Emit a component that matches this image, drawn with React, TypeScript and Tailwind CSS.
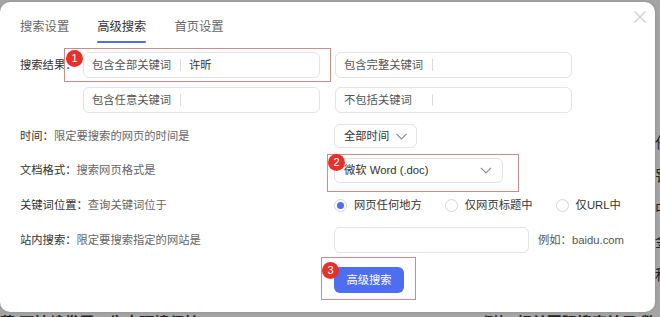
import React from 'react';

const Badge = ({ n }: { n: number }) => (
  <div className="w-[17px] h-[17px] rounded-full bg-[#e8302b] text-white text-[11px] leading-[17px] text-center">{n}</div>
);

const Chevron = ({ w = 11 }: { w?: number }) => (
  <svg width={w} height="7" viewBox="0 0 11 7" fill="none">
    <polyline points="0.5,0.8 5.5,6 10.5,0.8" stroke="#8a8a8a" strokeWidth="1.1" />
  </svg>
);

const KeywordInput = ({ prefix, value, w }: { prefix: string; value?: string; w: string }) => (
  <div className={`${w} h-[26px] border border-[#e3e3e3] rounded-[6px] flex items-center pl-[8px] bg-white`}>
    <span className="w-[88px] text-[#555]">{prefix}</span>
    <span className="w-px h-[12px] bg-[#dcdcdc]"></span>
    <span className="ml-[8px] text-[#333]">{value}</span>
  </div>
);

const Radio = ({ checked, label }: { checked?: boolean; label: string }) => (
  <div className="flex items-center gap-[7px]">
    <span className="w-[13px] h-[13px] rounded-full border border-[#d6d6d6] flex items-center justify-center bg-white">
      {checked && <span className="w-[7px] h-[7px] rounded-full bg-[#4e6ef2]"></span>}
    </span>
    <span className="text-[#333]">{label}</span>
  </div>
);

const Label = ({ name, desc }: { name: string; desc: string }) => (
  <div className="w-[314px]">
    <span className="text-[#333]">{name}：</span>
    <span className="text-[#666]">{desc}</span>
  </div>
);

export default function App() {
  return (
    <div className="w-[660px] h-[317px] overflow-hidden bg-[#a4a4a4] flex flex-col font-['Liberation_Sans','Noto_Sans_CJK_SC',sans-serif] text-[11.3px]">
      <div className="flex">
        <div className="relative w-[655px] h-[310px] mt-[2px] bg-white rounded-[10px] pt-[13px] pl-[20px] flex flex-col shadow-[0_0_3px_rgba(0,0,0,0.15)]">
          {/* close */}
          <svg className="absolute left-[634px] top-[9px]" width="12" height="12" viewBox="0 0 12 12">
            <path d="M0.5 0.5 L11.5 11.5 M11.5 0.5 L0.5 11.5" stroke="#cfcfcf" strokeWidth="1.2" />
          </svg>

          {/* tabs */}
          <div className="flex gap-[28px] text-[12.3px]">
            <div className="flex flex-col">
              <span className="h-[24px] leading-[24px] text-[#666]">搜索设置</span>
            </div>
            <div className="flex flex-col">
              <span className="h-[24px] leading-[24px] text-[#333]">高级搜索</span>
              <span className="mt-[2px] h-[2px] bg-[#4e6ef2] rounded-full"></span>
            </div>
            <div className="flex flex-col">
              <span className="h-[24px] leading-[24px] text-[#666]">首页设置</span>
            </div>
          </div>

          {/* keyword rows */}
          <div className="relative mt-[9px] flex items-center">
            <div className="w-[63px] text-[#333] whitespace-nowrap">搜索结果：</div>
            <div className="flex gap-[15px]">
              <KeywordInput prefix="包含全部关键词" value="许昕" w="w-[237px]" />
              <KeywordInput prefix="包含完整关键词" w="w-[237px]" />
            </div>
            <div className="absolute left-[44px] top-[-4px] w-[267px] h-[34px] border border-[#cf8b8b]"></div>
            <div className="absolute left-[46px] top-[-2px]"><Badge n={1} /></div>
          </div>
          <div className="mt-[9px] flex gap-[15px] pl-[63px]">
            <KeywordInput prefix="包含任意关键词" w="w-[237px]" />
            <KeywordInput prefix="不包括关键词" w="w-[237px]" />
          </div>

          {/* time */}
          <div className="mt-[11px] flex items-center">
            <Label name="时间" desc="限定要搜索的网页的时间是" />
            <div className="w-[83px] h-[24px] border border-[#e3e3e3] rounded-[6px] flex items-center pl-[9px] gap-[7px] text-[#333]">
              <span>全部时间</span>
              <Chevron />
            </div>
          </div>

          {/* doc format */}
          <div className="relative mt-[10px] flex items-center">
            <Label name="文档格式" desc="搜索网页格式是" />
            <div className="w-[169px] h-[25px] border border-[#e3e3e3] rounded-[6px] flex items-center justify-between pl-[9px] pr-[10px] text-[#333]">
              <span>微软 Word (.doc)</span>
              <Chevron w={12} />
            </div>
            <div className="absolute left-[307px] top-[-4px] w-[192px] h-[38px] border border-[#cf8b8b]"></div>
            <div className="absolute left-[308px] top-[-4px]"><Badge n={2} /></div>
          </div>

          {/* keyword position */}
          <div className="mt-[12px] h-[20px] flex items-center">
            <Label name="关键词位置" desc="查询关键词位于" />
            <div className="flex gap-[23px]">
              <Radio checked label="网页任何地方" />
              <Radio label="仅网页标题中" />
              <Radio label="仅URL中" />
            </div>
          </div>

          {/* site */}
          <div className="mt-[12px] flex items-center">
            <Label name="站内搜索" desc="限定要搜索指定的网站是" />
            <div className="w-[195px] h-[26px] border border-[#e3e3e3] rounded-[6px]"></div>
            <span className="ml-[9px] text-[#555]">例如：baidu.com</span>
          </div>

          {/* submit */}
          <div className="relative mt-[14px] pl-[314px]">
            <button className="w-[70px] h-[26px] rounded-[6px] bg-[#4e6ef2] text-white text-[11.3px]">高级搜索</button>
            <div className="absolute left-[301px] top-[-10px] w-[95px] h-[43px] border border-[#cf8b8b]"></div>
            <div className="absolute left-[302px] top-[-5px]"><Badge n={3} /></div>
          </div>
        </div>
        <div className="w-[5px] overflow-hidden flex flex-col text-[#222] text-[15px] leading-none whitespace-nowrap pt-[135px] gap-[18px]">
          <span>任</span>
          <span>罚</span>
          <span>中</span>
          <span>金</span>
          <span>科</span>
        </div>
      </div>
      <div className="flex justify-between text-[#222] text-[15px] font-bold leading-none whitespace-nowrap pt-[3px]">
        <span>蔽 可持续发展，生态环境保护</span>
        <span className="pr-[4px]">» 例如 相关国际搜索结果 数</span>
      </div>
    </div>
  );
}
